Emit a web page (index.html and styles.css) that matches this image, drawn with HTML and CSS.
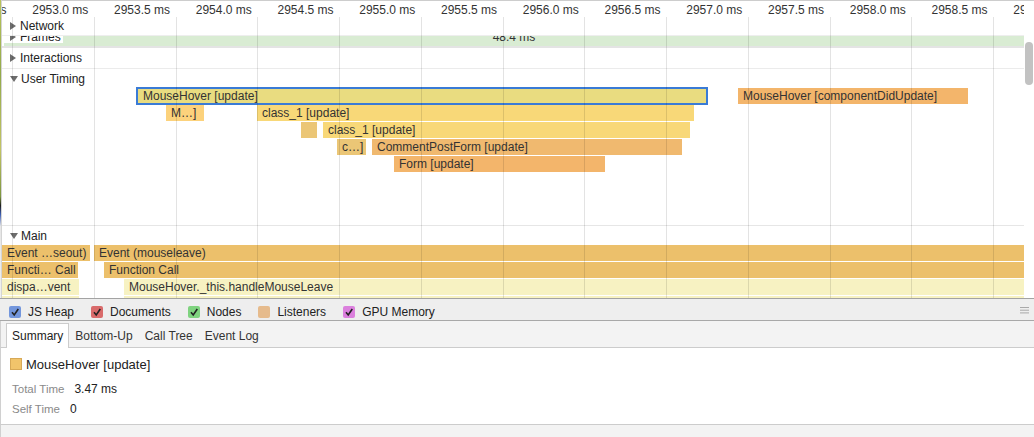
FILE: index.html
```html
<!DOCTYPE html>
<html>
<head>
<meta charset="utf-8">
<link rel="stylesheet" href="styles.css">
</head>
<body>
<div class="timeline">
  <div class="edge"></div>
  <div class="column">
    <div class="ruler">
      <span class="tick-label" style="left:-75.5px">2952.5 ms</span>
      <span class="tick-label" style="left:6.25px">2953.0 ms</span>
      <span class="tick-label" style="left:88px">2953.5 ms</span>
      <span class="tick-label" style="left:169.75px">2954.0 ms</span>
      <span class="tick-label" style="left:251.5px">2954.5 ms</span>
      <span class="tick-label" style="left:333.25px">2955.0 ms</span>
      <span class="tick-label" style="left:415px">2955.5 ms</span>
      <span class="tick-label" style="left:496.75px">2956.0 ms</span>
      <span class="tick-label" style="left:578.5px">2956.5 ms</span>
      <span class="tick-label" style="left:660.25px">2957.0 ms</span>
      <span class="tick-label" style="left:742px">2957.5 ms</span>
      <span class="tick-label" style="left:823.75px">2958.0 ms</span>
      <span class="tick-label" style="left:905.5px">2958.5 ms</span>
      <span class="tick-label" style="left:987.25px">2959.0 ms</span>
    </div>
    <div class="tracks">
      <div class="row row-network">
        <div class="track-label"><span class="tri-right"></span>Network</div>
      </div>
      <div class="row row-frames">
        <div class="frame-bar"><span class="frame-text">48.4 ms</span></div>
        <div class="track-label frames-label"><span class="tri-right"></span>Frames</div>
      </div>
      <div class="row row-interactions">
        <div class="track-label"><span class="tri-right"></span>Interactions</div>
      </div>
      <div class="row row-timing">
        <div class="track-label header"><span class="tri-down"></span>User Timing</div>
        <div class="bar bar-selected" style="left:134px;top:18px;width:572px">MouseHover [update]</div>
        <div class="bar bar-orange" style="left:736px;top:19px;width:230px">MouseHover [componentDidUpdate]</div>
        <div class="bar bar-gold" style="left:164px;top:36px;width:38px">M…]</div>
        <div class="bar bar-yellow" style="left:255px;top:36px;width:437px">class_1 [update]</div>
        <div class="bar bar-tan" style="left:299px;top:53px;width:16px"></div>
        <div class="bar bar-yellow" style="left:321px;top:53px;width:367px">class_1 [update]</div>
        <div class="bar bar-tan" style="left:335px;top:70px;width:29px">c…]</div>
        <div class="bar bar-orange2" style="left:370px;top:70px;width:310px">CommentPostForm [update]</div>
        <div class="bar bar-orange" style="left:392px;top:87px;width:211px">Form [update]</div>
      </div>
      <div class="row row-main">
        <div class="track-label header"><span class="tri-down"></span>Main</div>
        <div class="bar bar-event" style="left:0;top:19px;width:88px">Event …seout)</div>
        <div class="bar bar-event" style="left:92px;top:19px;width:930px">Event (mouseleave)</div>
        <div class="bar bar-event" style="left:0;top:36px;width:76px">Functi… Call</div>
        <div class="bar bar-event" style="left:102px;top:36px;width:920px">Function Call</div>
        <div class="bar bar-light" style="left:0;top:53px;width:77px">dispa…vent</div>
        <div class="bar bar-light" style="left:122px;top:53px;width:900px">MouseHover._this.handleMouseLeave</div>
        <div class="bar bar-light" style="left:0;top:70px;width:77px"></div>
        <div class="bar bar-light" style="left:122px;top:70px;width:900px"></div>
      </div>
      <div class="grid">
        <span class="gridline" style="left:10px"></span>
        <span class="gridline" style="left:91.75px"></span>
        <span class="gridline" style="left:173.5px"></span>
        <span class="gridline" style="left:255.25px"></span>
        <span class="gridline" style="left:337px"></span>
        <span class="gridline" style="left:418.75px"></span>
        <span class="gridline" style="left:500.5px"></span>
        <span class="gridline" style="left:582.25px"></span>
        <span class="gridline" style="left:664px"></span>
        <span class="gridline" style="left:745.75px"></span>
        <span class="gridline" style="left:827.5px"></span>
        <span class="gridline" style="left:909.25px"></span>
        <span class="gridline" style="left:991px"></span>
      </div>
    </div>
  </div>
  <div class="scrollbar"><div class="thumb"></div></div>
</div>

<div class="counters">
  <label class="counter"><span class="check c-blue"><svg viewBox="0 0 12 12" width="12" height="12"><path d="M3 6.3 L5.2 9 L9.3 3" fill="none" stroke="#222" stroke-width="1.6"/></svg></span>JS Heap</label>
  <label class="counter"><span class="check c-red"><svg viewBox="0 0 12 12" width="12" height="12"><path d="M3 6.3 L5.2 9 L9.3 3" fill="none" stroke="#222" stroke-width="1.6"/></svg></span>Documents</label>
  <label class="counter"><span class="check c-green"><svg viewBox="0 0 12 12" width="12" height="12"><path d="M3 6.3 L5.2 9 L9.3 3" fill="none" stroke="#222" stroke-width="1.6"/></svg></span>Nodes</label>
  <label class="counter"><span class="check c-tan"></span>Listeners</label>
  <label class="counter"><span class="check c-purple"><svg viewBox="0 0 12 12" width="12" height="12"><path d="M3 6.3 L5.2 9 L9.3 3" fill="none" stroke="#222" stroke-width="1.6"/></svg></span>GPU Memory</label>
  <span class="menu"><svg viewBox="0 0 9 7" width="9" height="7"><rect x="0" y="0" width="9" height="1" fill="#a9a9a9"/><rect x="0" y="2.7" width="9" height="1" fill="#a9a9a9"/><rect x="0" y="5.4" width="9" height="1" fill="#a9a9a9"/></svg></span>
</div>

<div class="tabs">
  <span class="tab selected">Summary</span>
  <span class="tab">Bottom-Up</span>
  <span class="tab">Call Tree</span>
  <span class="tab">Event Log</span>
</div>

<div class="summary">
  <div class="summary-title"><span class="swatch"></span>MouseHover [update]</div>
  <div class="summary-row"><span class="s-label">Total Time</span><span class="s-value">3.47 ms</span></div>
  <div class="summary-row"><span class="s-label">Self Time</span><span class="s-value">0</span></div>
</div>
<div class="footer"></div>
</body>
</html>
```

FILE: styles.css
```css
html, body {
  margin: 0;
  padding: 0;
}
body {
  width: 1034px;
  height: 437px;
  overflow: hidden;
  background: #fff;
  font-family: "Liberation Sans", Arial, sans-serif;
  font-size: 12px;
  color: #222;
}

.timeline {
  display: flex;
  height: 298px;
  overflow: hidden;
}
.edge {
  width: 1px;
  flex: none;
  border-right: 1px solid #d4d4d4;
  background: linear-gradient(#b9c45c 0%, #93aa4a 25%, #c3c465 50%, #7d9640 66%, #1c1c1c 69%, #3d5eb5 72%, #e6e6e6 76%, #f0f0f0 100%);
}
.column {
  flex: 1;
  display: flex;
  flex-direction: column;
  min-width: 0;
}

.ruler {
  position: relative;
  height: 17px;
  flex: none;
  box-sizing: border-box;
  border-top: 1px solid #cdcdcd;
  overflow: hidden;
}
.tick-label {
  position: absolute;
  top: 1px;
  width: 80px;
  text-align: right;
  line-height: 16px;
  color: #333;
  white-space: nowrap;
}

.tracks {
  position: relative;
  flex: 1;
  overflow: hidden;
}
.scrollbar {
  width: 10px;
  flex: none;
  box-sizing: border-box;
  border-top: 1px solid #cdcdcd;
  background: #fff;
}
.thumb {
  width: 8px;
  height: 43px;
  margin: 41px 0 0 1px;
  border-radius: 4px;
  background: #c2c2c2;
}

.row {
  position: relative;
}
.track-label {
  position: relative;
  display: flex;
  align-items: center;
  padding-left: 8px;
  color: #222;
  white-space: nowrap;
  z-index: 2;
}
.tri-right {
  flex: none;
  width: 0;
  height: 0;
  border-left: 6px solid #6c6c6c;
  border-top: 4px solid transparent;
  border-bottom: 4px solid transparent;
  margin-right: 4px;
}
.tri-down {
  flex: none;
  width: 0;
  height: 0;
  border-top: 6px solid #6c6c6c;
  border-left: 4px solid transparent;
  border-right: 4px solid transparent;
  margin-right: 3px;
}

.row-network {
  height: 18px;
}
.row-network .track-label {
  height: 18px;
}
.row-frames {
  height: 10px;
  border-top: 1px solid #eeeeee;
  border-bottom: 2px solid #e4e4e4;
  overflow: hidden;
}
.frame-bar {
  position: absolute;
  left: 2px;
  right: 0;
  top: 0;
  height: 10px;
  background: #d9ecd3;
  text-align: center;
}
.frame-text {
  display: block;
  line-height: 12px;
  margin-top: -5px;
  color: #333;
}
.frames-label {
  width: fit-content;
  margin-left: 2px;
  padding: 0 2px 0 6px;
  margin-top: -5px;
  height: 12px;
  line-height: 12px;
  background: #fff;
}
.row-interactions {
  height: 20px;
  border-bottom: 1px solid #ebebeb;
}
.row-interactions .track-label {
  height: 20px;
}
.row-timing {
  height: 156px;
  border-bottom: 1px solid #e6e6e6;
}
.header {
  height: 19px;
  padding-top: 1px;
  box-sizing: border-box;
}
.row-main {
  height: 72px;
}

.bar {
  position: absolute;
  height: 16px;
  line-height: 16px;
  padding-left: 5px;
  box-sizing: border-box;
  overflow: hidden;
  white-space: nowrap;
  color: #333;
  z-index: 1;
}
.bar-selected {
  height: 18px;
  line-height: 14px;
  padding-left: 5px;
  border: 2px solid #3a7bd6;
  background: #e9dc80;
}
.bar-orange {
  background: #f3b56b;
}
.bar-orange2 {
  background: #f0b96f;
}
.bar-gold {
  background: #fcd27c;
}
.bar-yellow {
  background: #f8d878;
}
.bar-tan {
  background: #ebc676;
}
.bar-event {
  background: #ecc06b;
}
.bar-light {
  background: #f7f2c2;
}

.grid {
  position: absolute;
  inset: 0;
  pointer-events: none;
  z-index: 3;
}
.gridline {
  position: absolute;
  top: 0;
  bottom: 0;
  width: 1px;
  background: rgba(0, 0, 0, 0.11);
}

.counters {
  display: flex;
  align-items: center;
  height: 23px;
  box-sizing: border-box;
  padding: 4px 0 0 9px;
  background: #eeeeee;
  border-top: 1px solid #a3a3a3;
  border-bottom: 1px solid #a8a8a8;
  color: #222;
}
.counter {
  display: flex;
  align-items: center;
  margin-right: 17px;
  white-space: nowrap;
}
.check {
  width: 12px;
  height: 12px;
  border-radius: 2px;
  margin-right: 7px;
  display: flex;
}
.c-blue { background: #7396dc; }
.c-red { background: #d96b6b; }
.c-green { background: #7fd37f; }
.c-tan { background: #e6bb8c; }
.c-purple { background: #db80dd; }
.menu {
  margin-left: auto;
  margin-right: 5px;
  display: flex;
  margin-top: -2px;
}

.tabs {
  display: flex;
  align-items: flex-end;
  height: 27px;
  box-sizing: border-box;
  padding: 2px 0 0 5px;
  background: #f3f3f3;
  border-bottom: 1px solid #cccccc;
  border-left: 1px solid #d0d0d0;
}
.tab {
  height: 25px;
  line-height: 24px;
  padding: 0 5px;
  border: 1px solid transparent;
  border-bottom: none;
  box-sizing: border-box;
  margin-bottom: -1px;
  color: #333;
}
.tab.selected {
  background: #fff;
  border-color: #cccccc;
  color: #222;
}

.summary {
  height: 77px;
  box-sizing: border-box;
  padding: 8px 0 0 9px;
  border-bottom: 1px solid #cccccc;
  border-left: 1px solid #d0d0d0;
}
.summary-title {
  display: flex;
  align-items: center;
  height: 16px;
  font-size: 13px;
  color: #222;
}
.swatch {
  width: 12px;
  height: 12px;
  box-sizing: border-box;
  background: #f1c46b;
  border: 1px solid #d7a957;
  margin-right: 4px;
}
.summary-row {
  display: flex;
  align-items: center;
  height: 20px;
  padding-left: 2px;
}
.summary-title + .summary-row {
  margin-top: 7px;
}
.s-label {
  font-size: 11.5px;
  color: #8a8a8a;
  margin-right: 10px;
}
.s-value {
  color: #222;
}
.footer {
  height: 13px;
  background: #f3f3f3;
  border-left: 1px solid #d0d0d0;
}
```
